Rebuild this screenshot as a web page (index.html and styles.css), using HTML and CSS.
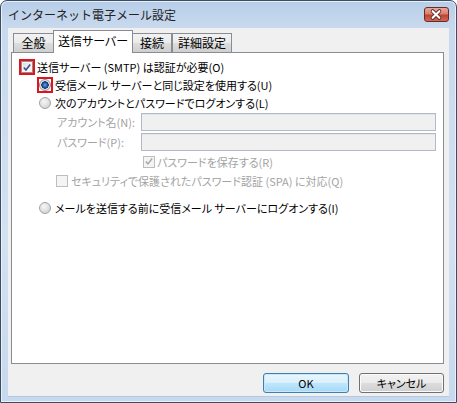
FILE: index.html
```html
<!DOCTYPE html>
<html lang="ja">
<head>
<meta charset="utf-8">
<link rel="stylesheet" href="styles.css">
</head>
<body>
<div class="window">
  <div class="titlebar">
    <span class="title">インターネット電子メール設定</span>
    <span class="close"><svg width="25" height="15" viewBox="0 0 25 15"><path d="M9 4 L16 11 M16 4 L9 11" stroke="#5a2a24" stroke-width="4" stroke-linecap="round"/><path d="M9 4 L16 11 M16 4 L9 11" stroke="#ffffff" stroke-width="2.2" stroke-linecap="round"/></svg></span>
  </div>
  <div class="client">
    <div class="tabs">
      <div class="tab t1">全般</div>
      <div class="tab active">送信サーバー</div>
      <div class="tab t3">接続</div>
      <div class="tab t4">詳細設定</div>
    </div>
    <div class="panel">
      <div class="row r1">
        <span class="mark hl"><span class="cb"><svg width="11" height="11" viewBox="0 0 11 11"><path d="M2 5.5 L4.3 8.2 L9 2.2" fill="none" stroke="#3f4f8c" stroke-width="1.8"/></svg></span></span>
        <span>送信サーバー (SMTP) は認証が必要(O)</span>
      </div>
      <div class="row r2">
        <span class="mark hl"><span class="rb on"></span></span>
        <span>受信メール サーバーと同じ設定を使用する(U)</span>
      </div>
      <div class="row r3">
        <span class="mark"><span class="rb"></span></span>
        <span>次のアカウントとパスワードでログオンする(L)</span>
      </div>
      <div class="row field dis">
        <span class="lbl">アカウント名(N):</span>
        <span class="input"></span>
      </div>
      <div class="row field dis">
        <span class="lbl">パスワード(P):</span>
        <span class="input"></span>
      </div>
      <div class="row r6 dis">
        <span class="cb dcb"><svg width="11" height="11" viewBox="0 0 11 11"><path d="M2 5.5 L4.3 8.2 L9 2.2" fill="none" stroke="#a8a8a8" stroke-width="1.6"/></svg></span>
        <span>パスワードを保存する(R)</span>
      </div>
      <div class="row r7 dis">
        <span class="cb dcb"></span>
        <span>セキュリティで保護されたパスワード認証 (SPA) に対応(Q)</span>
      </div>
      <div class="row r8">
        <span class="mark"><span class="rb"></span></span>
        <span>メールを送信する前に受信メール サーバーにログオンする(I)</span>
      </div>
    </div>
    <div class="buttons">
      <button class="btn default">OK</button>
      <button class="btn">キャンセル</button>
    </div>
  </div>
</div>
</body>
</html>
```

FILE: styles.css
```css
* { box-sizing: border-box; }
html, body { margin: 0; padding: 0; background: #ffffff; }
body {
  font-family: "Noto Sans CJK JP", "Noto Sans", sans-serif;
  font-size: 11px;
  font-feature-settings: "palt";
  color: #000;
}
.window {
  width: 457px;
  height: 403px;
  border: 1px solid #3a4d63;
  border-radius: 7px 7px 0 0;
  background: linear-gradient(to bottom, #b7cde8 0px, #c9daee 28px, #d3e1f1 60%, #c7d9ee 100%);
  box-shadow: inset 0 0 0 1px #e8f0f9;
  display: flex;
  flex-direction: column;
}
.titlebar {
  height: 27px;
  display: flex;
  align-items: flex-start;
  justify-content: space-between;
  padding: 6px 7px 0 7px;
}
.title {
  font-size: 12px;
  font-feature-settings: normal;
  line-height: 16px;
  color: #222;
}
.close {
  width: 25px;
  height: 15px;
  border: 1px solid #6b2a22;
  border-radius: 3px;
  background: linear-gradient(to bottom, #e7a79d 0%, #d9806f 45%, #c0432f 55%, #d0685a 100%);
  display: flex;
  overflow: hidden;
}
.close svg { display: block; margin: -1px 0 0 -1px; }
.client {
  margin: 0 7px;
  height: 369px;
  background: #f0f0f0;
  padding: 2px 5px 0 3px;
  border-bottom: 1px solid #b6c8de;
}
.tabs {
  display: flex;
  align-items: flex-end;
  height: 22px;
  margin-left: 2px;
}
.tab {
  height: 19px;
  border: 1px solid #898c95;
  border-bottom: none;
  background: linear-gradient(to bottom, #f2f2f2 0%, #ebebeb 50%, #dddddd 51%, #cfcfcf 100%);
  line-height: 18px;
  text-align: center;
  font-size: 12px;
}
.t1 { width: 40px; border-right: none; }
.t3 { width: 39px; border-left: none; }
.t4 { width: 60px; }
.tab.active {
  width: 80px;
  height: 23px;
  margin-bottom: -1px;
  background: #ffffff;
  position: relative;
  z-index: 1;
  line-height: 20px;
}
.panel {
  width: 433px;
  height: 312px;
  border: 1px solid #898c95;
  background: #ffffff;
  padding-top: 5px;
  display: flex;
  flex-direction: column;
}
.row {
  display: flex;
  align-items: center;
  height: 18px;
  white-space: nowrap;
  line-height: 16px;
}
.r1 { margin-left: 7px; gap: 2px; }
.r2, .r3, .r8 { margin-left: 25px; gap: 2px; }
.r8 { margin-top: 7px; height: 20px; }
.field { height: 20px; margin-left: 45px; }
.field .lbl { width: 84px; }
.r6 { margin-left: 131px; gap: 2px; height: 19px; }
.r7 { margin-left: 44px; gap: 3px; height: 20px; }
.dis { color: #a3a3a3; }
.mark {
  width: 16px;
  height: 16px;
  border: 2px solid transparent;
  display: flex;
  align-items: center;
  justify-content: center;
}
.mark.hl { border-color: #e2141b; }
.cb {
  width: 12px;
  height: 12px;
  border: 1px solid #8e8f8f;
  background: linear-gradient(135deg, #d5d8dd 0%, #eef0f2 50%, #fcfcfc 100%);
  box-shadow: inset 0 0 0 1px #f6f6f6;
  display: flex;
  align-items: center;
  justify-content: center;
  flex: none;
}
.cb svg { display: block; }
.dcb {
  border-color: #bdbdbd;
  background: #f4f4f4;
  box-shadow: none;
}
.rb {
  width: 12px;
  height: 12px;
  border-radius: 50%;
  border: 1px solid #a2a2a2;
  background: radial-gradient(circle at 40% 35%, #f6f6f6 0%, #e3e3e3 45%, #c9c9c9 100%);
  flex: none;
}
.rb.on {
  border-color: #8b8f96;
  background: radial-gradient(circle at 50% 50%, #6fa4e0 0px, #1d4f9c 2.5px, #163a78 3.5px, #e9eaec 4px, #d0d2d6 100%);
}
.input {
  width: 295px;
  height: 18px;
  border: 1px solid #b3bac5;
  background: #f0f0f0;
  box-shadow: inset 0 1px 0 #e2e6eb;
}
.buttons {
  display: flex;
  justify-content: flex-end;
  gap: 10px;
  margin-top: 9px;
}
.btn {
  width: 85px;
  height: 20px;
  font-family: "Noto Sans CJK JP", "Noto Sans", sans-serif;
  font-size: 11px;
  font-feature-settings: "palt";
  line-height: 16px;
  padding: 0;
  color: #000;
  border: 1px solid #707070;
  border-radius: 3px;
  background: linear-gradient(to bottom, #f2f2f2 0%, #ebebeb 50%, #dddddd 51%, #cfcfcf 100%);
  box-shadow: inset 0 0 0 1px #fbfbfb;
}
.btn.default {
  width: 86px;
  border-color: #3c7fb1;
  background: linear-gradient(to bottom, #eaf6fd 0%, #d9f0fc 50%, #bee6fd 51%, #a7d9f5 100%);
  box-shadow: inset 0 0 0 1px #c8e8fa;
}
```
